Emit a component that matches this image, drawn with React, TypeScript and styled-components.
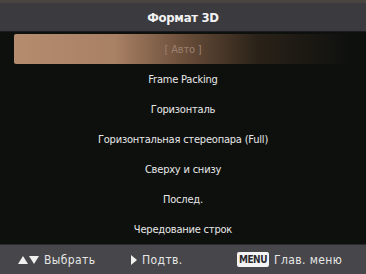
import * as React from "react";
import styled, { createGlobalStyle } from "styled-components";

const GlobalStyle = createGlobalStyle`
    html, body {
        margin: 0;
        padding: 0;
        background: #0e100e;
    }
    body {
        font-family: "DejaVu Sans Condensed", "DejaVu Sans", sans-serif;
    }
`

const Screen = styled.div`
    width: 366px;
    height: 274px;
    display: flex;
    flex-direction: column;
    background: #0e100e;
    overflow: hidden;
`

const Header = styled.div`
    height: 28px;
    flex: 0 0 28px;
    border-top: 3px solid #4a4440;
    background: #3b3b3f;
    border-bottom: 1px solid #1c1c1e;
    display: flex;
    align-items: center;
    justify-content: center;
    color: #f2f2f2;
    font-size: 13px;
    font-weight: bold;
    letter-spacing: -0.3px;
`

const List = styled.div`
    flex: 1;
    display: flex;
    flex-direction: column;
    padding: 2px 14px 0;
`

const Row = styled.div<{ $active?: boolean }>`
    height: 30px;
    flex: 0 0 30px;
    display: flex;
    align-items: center;
    justify-content: center;
    font-size: 11px;
    letter-spacing: -0.2px;
    color: ${p => p.$active ? '#9a8070' : '#e8e8e8'};
    border-radius: 2px;
    background: ${p => p.$active
        ? 'linear-gradient(90deg, #b58c6e 0%, #a88064 30%, #6a4e3a 50%, #2a2218 72%, #0e100e 100%)'
        : 'transparent'};
`

const Footer = styled.div`
    height: 29px;
    flex: 0 0 29px;
    background: #47474b;
    border-top: 1px solid #2a2a2c;
    display: flex;
    align-items: center;
    padding: 0 0 0 18px;
    color: #e6e6e6;
    font-size: 12px;
    letter-spacing: 0.4px;
    white-space: nowrap;
`

const Hint = styled.div<{ $width: number }>`
    display: flex;
    align-items: center;
    gap: 5px;
    flex: 0 0 ${p => p.$width}px;
`

const Arrows = styled.svg`
    display: block;
    fill: #f0f0f0;
`

const Badge = styled.span`
    background: #f4f4f4;
    color: #2a2a2e;
    font-size: 10px;
    font-weight: bold;
    letter-spacing: -0.5px;
    padding: 2px 2px;
    border-radius: 2px;
    line-height: 11px;
`

const items = [
    '[ Авто ]',
    'Frame Packing',
    'Горизонталь',
    'Горизонтальная стереопара (Full)',
    'Сверху и снизу',
    'Послед.',
    'Чередование строк',
]

function App() {
    return <Screen>
        <GlobalStyle />
        <Header>Формат 3D</Header>
        <List>
            {items.map((item, i) => <Row key={item} $active={i === 0}>{item}</Row>)}
        </List>
        <Footer>
            <Hint $width={113}>
                <Arrows width="21" height="8" viewBox="0 0 21 8">
                    <path d="M5 0 L10 8 L0 8 Z" />
                    <path d="M11 0 L21 0 L16 8 Z" />
                </Arrows>
                Выбрать
            </Hint>
            <Hint $width={106}>
                <Arrows width="6" height="10" viewBox="0 0 6 10">
                    <path d="M0 0 L6 5 L0 10 Z" />
                </Arrows>
                Подтв.
            </Hint>
            <Hint $width={110}><Badge>MENU</Badge>Глав. меню</Hint>
        </Footer>
    </Screen>
}

export default App;
